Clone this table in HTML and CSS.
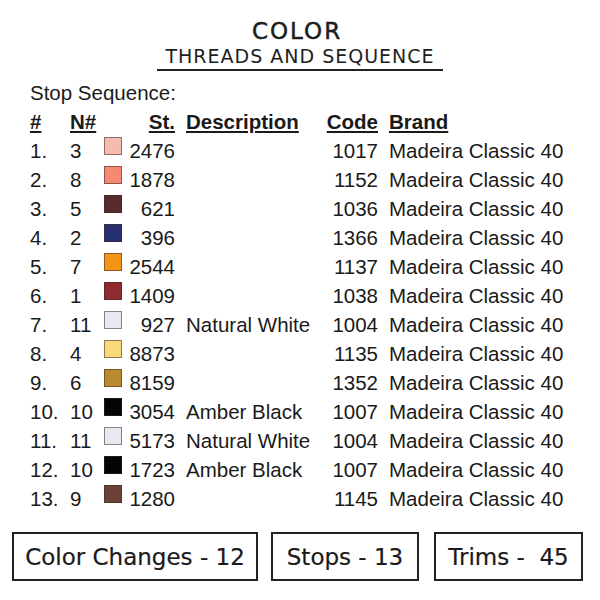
FILE: index.html
```html
<!DOCTYPE html>
<html>
<head>
<meta charset="utf-8">
<link rel="stylesheet" href="styles.css">
</head>
<body>
<div class="page">
  <header class="title">
    <div class="title-main">COLOR</div>
    <div class="title-sub">THREADS AND SEQUENCE</div>
  </header>
  <div class="stop-label">Stop Sequence:</div>
  <div class="seq">
    <div class="h">#</div><div class="h">N#</div><div></div><div class="h r">St.</div><div class="h desc">Description</div><div class="h r">Code</div><div class="h brand">Brand</div>

    <div>1.</div><div>3</div><div class="sw" style="background:#f3bcae"></div><div class="r">2476</div><div class="desc"></div><div class="r">1017</div><div class="brand">Madeira Classic 40</div>
    <div>2.</div><div>8</div><div class="sw" style="background:#f58a72"></div><div class="r">1878</div><div class="desc"></div><div class="r">1152</div><div class="brand">Madeira Classic 40</div>
    <div>3.</div><div>5</div><div class="sw" style="background:#5a2b2e"></div><div class="r">621</div><div class="desc"></div><div class="r">1036</div><div class="brand">Madeira Classic 40</div>
    <div>4.</div><div>2</div><div class="sw" style="background:#263070"></div><div class="r">396</div><div class="desc"></div><div class="r">1366</div><div class="brand">Madeira Classic 40</div>
    <div>5.</div><div>7</div><div class="sw" style="background:#f39418"></div><div class="r">2544</div><div class="desc"></div><div class="r">1137</div><div class="brand">Madeira Classic 40</div>
    <div>6.</div><div>1</div><div class="sw" style="background:#8e2a30"></div><div class="r">1409</div><div class="desc"></div><div class="r">1038</div><div class="brand">Madeira Classic 40</div>
    <div>7.</div><div>11</div><div class="sw" style="background:#e8e8f0"></div><div class="r">927</div><div class="desc">Natural White</div><div class="r">1004</div><div class="brand">Madeira Classic 40</div>
    <div>8.</div><div>4</div><div class="sw" style="background:#f8d878"></div><div class="r">8873</div><div class="desc"></div><div class="r">1135</div><div class="brand">Madeira Classic 40</div>
    <div>9.</div><div>6</div><div class="sw" style="background:#ba8a2e"></div><div class="r">8159</div><div class="desc"></div><div class="r">1352</div><div class="brand">Madeira Classic 40</div>
    <div>10.</div><div>10</div><div class="sw" style="background:#050505"></div><div class="r">3054</div><div class="desc">Amber Black</div><div class="r">1007</div><div class="brand">Madeira Classic 40</div>
    <div>11.</div><div>11</div><div class="sw" style="background:#e8e8f0"></div><div class="r">5173</div><div class="desc">Natural White</div><div class="r">1004</div><div class="brand">Madeira Classic 40</div>
    <div>12.</div><div>10</div><div class="sw" style="background:#050505"></div><div class="r">1723</div><div class="desc">Amber Black</div><div class="r">1007</div><div class="brand">Madeira Classic 40</div>
    <div>13.</div><div>9</div><div class="sw" style="background:#6a4238"></div><div class="r">1280</div><div class="desc"></div><div class="r">1145</div><div class="brand">Madeira Classic 40</div>
  </div>
  <div class="stats">
    <div class="stat s1">Color Changes - 12</div>
    <div class="stat s2">Stops - 13</div>
    <div class="stat s3">Trims -&nbsp; 45</div>
  </div>
</div>
</body>
</html>
```
FILE: styles.css
```css
html, body {
  margin: 0;
  padding: 0;
  background: #ffffff;
}
.page {
  width: 600px;
  height: 600px;
  color: #1a1a1a;
}
.title {
  padding-top: 18px;
  text-align: center;
  font-family: "DejaVu Sans", sans-serif;
  color: #1e1e1e;
}
.title-main {
  font-size: 23px;
  line-height: 26px;
  letter-spacing: 2px;
  padding-left: 0;
  margin-right: 6px;
  -webkit-text-stroke: 0.5px #1e1e1e;
}
.title-sub {
  display: inline-block;
  font-size: 19px;
  line-height: 24px;
  letter-spacing: 1px;
  padding: 0 8px 1px 8px;
  border-bottom: 2px solid #222;
}
.stop-label {
  margin-top: 7px;
  padding-left: 30px;
  font-family: "Liberation Sans", Arial, sans-serif;
  font-size: 20.5px;
  line-height: 29px;
}
.seq {
  display: grid;
  grid-template-columns: 40px 34px 18px 53px 145px 58px auto;
  grid-auto-rows: 29px;
  padding-left: 30px;
  font-family: "Liberation Sans", Arial, sans-serif;
  font-size: 20.5px;
  line-height: 29px;
  white-space: nowrap;
}
.h {
  font-weight: bold;
  text-decoration: underline;
  text-decoration-thickness: 2px;
  text-underline-offset: 2px;
}
.r {
  text-align: right;
}
.desc {
  padding-left: 11px;
}
.brand {
  padding-left: 11px;
}
.sw {
  box-sizing: border-box;
  width: 18px;
  height: 18px;
  margin-top: 1px;
  border: 1px solid rgba(60, 40, 40, 0.55);
}
.stats {
  display: flex;
  margin-top: 19px;
  padding-left: 12px;
  gap: 13px;
}
.stat {
  box-sizing: border-box;
  height: 49px;
  border: 2px solid #222;
  display: flex;
  align-items: center;
  justify-content: center;
  font-family: "DejaVu Sans", sans-serif;
  font-size: 23px;
  color: #1a1a1a;
  white-space: nowrap;
  -webkit-text-stroke: 0.2px #1a1a1a;
}
.s1 { width: 246px; }
.s2 { width: 148px; }
.s3 { width: 149px; margin-left: 2px; }
```
